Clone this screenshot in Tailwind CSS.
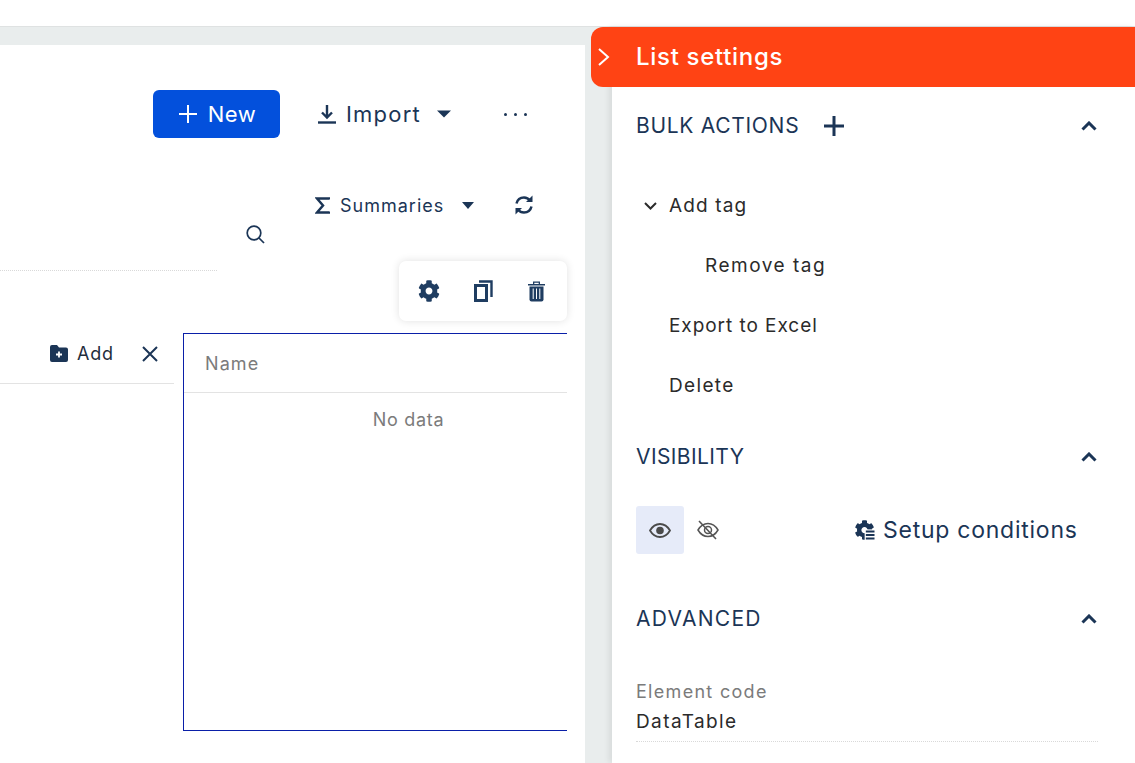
<!DOCTYPE html>
<html lang="en">
<head>
  <meta charset="UTF-8" />
  <title>List settings</title>
  <script src="https://cdn.jsdelivr.net/npm/@tailwindcss/browser@4"></script>
</head>
<body class="font-['Inter','Liberation_Sans',sans-serif] bg-white overflow-hidden">
  <div class="flex flex-col h-[763px] w-[1135px] overflow-hidden">
    <div class="h-[27px] shrink-0 bg-white border-b border-[#dfe2e2]"></div>

    <div class="flex flex-1 min-h-0 bg-[#e9eded]">
      <!-- form canvas -->
      <div class="w-[585px] shrink-0 mt-[18px] bg-white text-[#1b3556]">
        <div class="flex items-center h-[48px] mt-[45px] pl-[153px]">
          <button class="flex items-center justify-center gap-[10px] w-[127px] h-[48px] pl-[1px] rounded-[6px] bg-[#0350dc] text-white text-[22px] tracking-[0.5px]">
            <svg width="20" height="20" viewBox="0 0 20 20" fill="none" stroke="white" stroke-width="2"><path d="M10 1v18M1 10h18"/></svg>
            New
          </button>
          <svg class="ml-[38px]" width="18" height="20" viewBox="0 0 18 20" fill="none" stroke="#1b3556"><path d="M9 1v12M4 8.500 9 13.500 14 8.500" stroke-width="2.400"/><path d="M0 18.500h18" stroke-width="2.400"/></svg>
          <span class="ml-[10px] text-[22px] tracking-[1.2px]">Import</span>
          <svg class="ml-[16px]" width="14" height="8" viewBox="0 0 14 8" fill="#1b3556"><path d="M0 .5h14L7 7.500z"/></svg>
          <div class="flex gap-[7px] ml-[53px]">
            <span class="w-[3px] h-[3px] rounded-full bg-[#1b3556]"></span>
            <span class="w-[3px] h-[3px] rounded-full bg-[#1b3556]"></span>
            <span class="w-[3px] h-[3px] rounded-full bg-[#1b3556]"></span>
          </div>
        </div>

        <div class="flex items-center h-[24px] mt-[55px] pl-[315px]">
          <svg width="15" height="17" viewBox="0 0 15 17" fill="none" stroke="#1b3556" stroke-width="2.500"><path d="M14 2.500V1.500H2l6 7-6 7h12v-1"/></svg>
          <span class="ml-[10px] text-[18px] tracking-[1px]">Summaries</span>
          <svg class="ml-[18px]" width="12" height="7" viewBox="0 0 12 7" fill="#1b3556"><path d="M0 0h12L6 7z"/></svg>
          <svg class="ml-[40px]" width="20" height="20" viewBox="0 0 20 20" fill="none" stroke="#1b3556" stroke-width="2.500"><path d="M2.500 8.500C3.500 4.500 6.500 2.500 10 2.500c2.500 0 4.500 1 6 3"/><path d="M17.500 11.500c-1 4-4 6-7.500 6-2.500 0-4.500-1-6-3"/><path d="M18.500 .5v6.500h-6.500z" fill="#1b3556" stroke="none"/><path d="M1.500 19.500V13h6.500z" fill="#1b3556" stroke="none"/></svg>
        </div>

        <div class="flex items-center h-[24px] mt-[5px] pl-[246px]">
          <svg width="19" height="19" viewBox="0 0 19 19" fill="none" stroke="#1b3556" stroke-width="1.700"><circle cx="8" cy="8" r="6.800"/><path d="M13 13l5 5"/></svg>
        </div>

        <div class="flex h-[60px] mt-[15px]">
          <div class="w-[399px] shrink-0">
            <div class="w-[217px] h-[10px] border-b border-dotted border-[#d9d9d9]"></div>
          </div>
          <div class="flex items-center w-[168px] h-[60px] rounded-[7px] bg-white shadow-[0_0_8px_rgba(0,0,0,0.12)] pl-[19px]">
            <svg width="22" height="22" viewBox="0 0 512 512" fill="#1f3d61"><path d="M487.400 315.700l-42.600-24.600c4.300-23.200 4.300-47 0-70.200l42.600-24.600c4.900-2.800 7.100-8.600 5.500-14-11.100-35.600-30-67.800-54.700-94.600-3.800-4.100-10-5.100-14.800-2.300L380.800 110c-17.900-15.400-38.500-27.300-60.800-35.100V25.800c0-5.600-3.900-10.500-9.400-11.700-36.700-8.200-74.300-7.800-109.200 0-5.500 1.200-9.400 6.100-9.400 11.700V75c-22.200 7.900-42.800 19.800-60.800 35.100L88.700 85.500c-4.900-2.800-11-1.900-14.800 2.300-24.700 26.700-43.600 58.900-54.700 94.600-1.700 5.400.6 11.200 5.500 14L67.300 221c-4.300 23.200-4.300 47 0 70.200l-42.600 24.600c-4.900 2.800-7.100 8.600-5.500 14 11.100 35.600 30 67.800 54.700 94.600 3.800 4.100 10 5.100 14.800 2.300l42.600-24.600c17.900 15.400 38.500 27.300 60.800 35.100v49.200c0 5.600 3.900 10.500 9.400 11.700 36.700 8.200 74.300 7.800 109.200 0 5.500-1.200 9.400-6.100 9.400-11.700v-49.200c22.200-7.900 42.800-19.800 60.800-35.100l42.600 24.600c4.900 2.800 11 1.900 14.800-2.300 24.700-26.700 43.600-58.900 54.700-94.600 1.500-5.500-.7-11.300-5.600-14.100zM256 336c-44.100 0-80-35.900-80-80s35.900-80 80-80 80 35.900 80 80-35.900 80-80 80z"/></svg>
            <svg class="ml-[34px]" width="19" height="22" viewBox="0 0 19 22" fill="none" stroke="#1f3d61"><path d="M5 1.500H17.500V17" stroke-width="2.400"/><rect x="1.500" y="5.500" width="11" height="15" stroke-width="3"/></svg>
            <svg class="ml-[35px]" width="17" height="21" viewBox="0 0 17 21" fill="#1f3d61"><path d="M0 3h17v1.500H0zM5 0.500h7V3h-1.300V1.700H6.300V3H5z"/><path d="M1.500 5.500h14v13a2 2 0 0 1-2 2h-10a2 2 0 0 1-2-2z"/><path d="M5.200 7.500v10.500M8.500 7.500v10.500M11.800 7.500v10.500" stroke="white" stroke-width="1"/></svg>
          </div>
        </div>

        <div class="flex h-[398px] mt-[12px]">
          <div class="w-[174px] shrink-0 h-[51px] border-b border-[#e3e3e3] flex items-center pl-[50px] pb-[9px]">
            <svg width="18" height="17" viewBox="0 0 18 17"><path d="M0 2a2 2 0 0 1 2-2h5l2 2.500h7a2 2 0 0 1 2 2V15a2 2 0 0 1-2 2H2a2 2 0 0 1-2-2z" fill="#1b3556"/><path d="M9 6.500v6M6 9.500h6" stroke="white" stroke-width="1.800"/></svg>
            <span class="ml-[9px] text-[18px] text-[#1f2d3d] tracking-[0.8px]">Add</span>
            <svg class="ml-[28px]" width="16" height="16" viewBox="0 0 16 16" fill="none" stroke="#1b3556" stroke-width="2"><path d="M1 1l14 14M15 1 1 15"/></svg>
          </div>
          <div class="w-[384px] ml-[9px] shrink-0 h-[398px] border-y border-l border-[#0a1fa8]">
            <div class="h-[59px] border-b border-[#e3e3e3] flex items-center pl-[21px] pt-[1px] text-[18px] tracking-[1.1px] text-[#7b7b7b]">Name</div>
            <div class="pl-[66px] pt-[13px] text-center text-[18px] tracking-[0.7px] text-[#7b7b7b]">No data</div>
          </div>
        </div>
      </div>

      <!-- settings drawer -->
      <div class="w-[523px] ml-[27px] shrink-0 bg-white shadow-[-3px_0_6px_rgba(0,0,0,0.08)]">
        <div class="flex items-center h-[60px] -ml-[21px] rounded-l-[12px] bg-[#ff4314] text-white">
          <svg class="ml-[6px]" width="13" height="20" viewBox="0 0 13 20" fill="none" stroke="white" stroke-width="2"><path d="M2 2l9 8-9 8"/></svg>
          <span class="ml-[26px] text-[24px] font-medium tracking-[0.7px]">List settings</span>
        </div>

        <div class="pl-[24px] pr-[37px] text-[#1b3556]">
          <div class="flex items-center h-[24px] mt-[27px]">
            <span class="text-[21px] tracking-[0.7px]">BULK ACTIONS</span>
            <svg class="ml-[24px]" width="22" height="22" viewBox="0 0 22 22" fill="none" stroke="#1b3556" stroke-width="3"><path d="M11 1v20M1 11h20"/></svg>
            <svg class="ml-auto mr-[1px]" width="16" height="10" viewBox="0 0 16 10" fill="none" stroke="#1b3556" stroke-width="3"><path d="M1.500 8.500 8 2l6.500 6.500"/></svg>
          </div>

          <div class="mt-[38px] text-[19px] text-[#2b2b2b]">
            <div class="flex items-center h-[60px] tracking-[1.15px]">
              <svg class="ml-[8px]" width="13" height="8" viewBox="0 0 13 8" fill="none" stroke="#2b2b2b" stroke-width="2"><path d="M1 1l5.500 5.500L12 1"/></svg>
              <span class="ml-[12px]">Add tag</span>
            </div>
            <div class="flex items-center h-[60px] pl-[69px] tracking-[1.5px]">Remove tag</div>
            <div class="flex items-center h-[60px] pl-[33px] tracking-[0.95px]">Export to Excel</div>
            <div class="flex items-center h-[60px] pl-[33px] tracking-[1.35px]">Delete</div>
          </div>

          <div class="flex items-center h-[24px] mt-[29px]">
            <span class="text-[21px] tracking-[0.4px]">VISIBILITY</span>
            <svg class="ml-auto mr-[1px]" width="16" height="10" viewBox="0 0 16 10" fill="none" stroke="#1b3556" stroke-width="3"><path d="M1.500 8.500 8 2l6.500 6.500"/></svg>
          </div>

          <div class="flex items-center h-[48px] mt-[37px]">
            <div class="flex items-center justify-center w-[48px] h-[48px] rounded-[3px] bg-[#e6ebf9]">
              <svg width="22" height="15" viewBox="0 0 22 15" fill="none" stroke="#4a4a4a" stroke-width="1.800"><path d="M1 7.500C3.500 3.200 7 1 11 1s7.500 2.200 10 6.500C18.500 11.800 15 14 11 14S3.500 11.800 1 7.500z"/><circle cx="11" cy="7.500" r="3.800" fill="#4a4a4a" stroke="none"/></svg>
            </div>
            <svg class="ml-[13px]" width="22" height="20" viewBox="0 0 22 20" fill="none" stroke="#555555" stroke-width="1.500"><path d="M1 10C3.500 5.700 7 3.500 11 3.500s7.500 2.200 10 6.500c-2.500 4.300-6 6.500-10 6.500S3.500 14.300 1 10z"/><circle cx="11" cy="10" r="3.500"/><path d="M2 1l17 18" stroke-width="1.600"/></svg>
            <svg class="ml-[135px]" width="21" height="20" viewBox="0 0 512 512" fill="#1b3556"><path d="M487.400 315.700l-42.600-24.600c4.300-23.200 4.300-47 0-70.200l42.600-24.600c4.900-2.800 7.100-8.600 5.500-14-11.100-35.600-30-67.800-54.700-94.600-3.800-4.100-10-5.100-14.800-2.300L380.800 110c-17.900-15.400-38.500-27.300-60.800-35.100V25.800c0-5.600-3.900-10.500-9.400-11.700-36.700-8.200-74.300-7.800-109.200 0-5.500 1.200-9.400 6.100-9.400 11.700V75c-22.200 7.900-42.800 19.800-60.800 35.100L88.700 85.500c-4.900-2.800-11-1.900-14.800 2.300-24.700 26.700-43.600 58.900-54.700 94.600-1.700 5.400.6 11.200 5.500 14L67.300 221c-4.300 23.200-4.300 47 0 70.200l-42.600 24.600c-4.900 2.800-7.100 8.600-5.500 14 11.100 35.600 30 67.800 54.700 94.600 3.800 4.100 10 5.100 14.800 2.300l42.600-24.600c17.900 15.400 38.500 27.300 60.800 35.100v49.200c0 5.600 3.900 10.500 9.400 11.700 36.700 8.200 74.300 7.800 109.200 0 5.500-1.200 9.400-6.100 9.400-11.700v-49.200c22.200-7.900 42.800-19.800 60.800-35.100l42.600 24.600c4.900 2.800 11 1.900 14.800-2.300 24.700-26.700 43.600-58.900 54.700-94.600 1.500-5.500-.7-11.300-5.600-14.100zM256 336c-44.100 0-80-35.900-80-80s35.900-80 80-80 80 35.900 80 80-35.900 80-80 80z"/><path d="M260 240h252v272H260z" fill="white"/><path d="M290 270h222v50H290zM290 360h222v50H290zM290 450h222v50H290z"/></svg>
            <span class="ml-[8px] text-[23px] tracking-[0.75px]">Setup conditions</span>
          </div>

          <div class="flex items-center h-[24px] mt-[53px]">
            <span class="text-[21px] tracking-[1.3px]">ADVANCED</span>
            <svg class="ml-auto mr-[1px]" width="16" height="10" viewBox="0 0 16 10" fill="none" stroke="#1b3556" stroke-width="3"><path d="M1.500 8.500 8 2l6.500 6.500"/></svg>
          </div>

          <div class="mt-[49px]">
            <div class="text-[18px] leading-[24px] text-[#7b7b7b] tracking-[1.3px]">Element code</div>
            <div class="mt-[5px] text-[19px] leading-[26px] text-[#2b2b2b] tracking-[1.4px] h-[33px] border-b border-dotted border-[#d9d9d9]">DataTable</div>
          </div>
        </div>
      </div>
    </div>
  </div>
</body>
</html>
